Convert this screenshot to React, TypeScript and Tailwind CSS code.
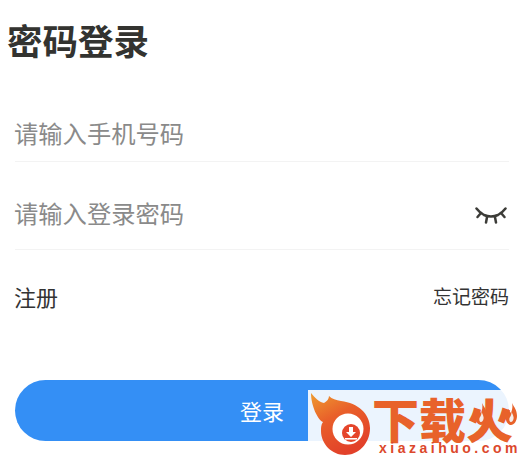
const cjk = "font-['Noto_Sans_CJK_SC','Noto_Sans',sans-serif]";

function EyeClosed() {
  return (
    <svg width="32" height="18" viewBox="0 0 32 18" fill="none" stroke="#3c3c38" strokeWidth="2.500" strokeLinecap="round" className="mr-[2px] mt-[6px]">
      <path d="M1.500 1.500 Q5 6 9 8 Q16 11 23 8 Q27 6 30.500 1.500" />
      <path d="M6 6 L2.500 10" />
      <path d="M26 6 L29.500 10" />
      <path d="M12 10 L11 15.500" />
      <path d="M20 10 L21 15.500" />
    </svg>
  );
}

function SideFlame({ className }: { className: string }) {
  return (
    <svg width="13" height="22" viewBox="0 0 13 22" className={className}>
      <path
        d="M7 0 C9 4 12 7 12 13 C12 18 9 22 6 22 C3 22 0 18 1 13 C2 10 3 9 3 6 C5 8 5 9 6 10 C7 7 8 4 7 0 Z"
        fill="#e8622a"
      />
      <path d="M6.500 9 C8 12 9 14 8.500 16 C8 18 7 19 6 19 C4.500 19 4 17 4.500 15 C5.500 13 6.500 12 6.500 9 Z" fill="#f4ecea" />
    </svg>
  );
}

function Watermark() {
  return (
    <div className="absolute left-[308px] top-[390px] flex h-[69px] w-[216px] bg-[#ffffff]/90">
      <svg width="66" height="69" viewBox="0 0 66 69" className="shrink-0">
        <defs>
          <linearGradient id="flame" x1="0" y1="0" x2="0.5" y2="1">
            <stop offset="0" stopColor="#ee9c30" />
            <stop offset="0.45" stopColor="#e9602a" />
            <stop offset="1" stopColor="#e2412a" />
          </linearGradient>
        </defs>
        <path
          d="M3 3 C7 8 11 12 16 13 C19 11 21 9 21 6 C24 9 28 10 33 11 C50 13 62 24 62 38 C62 54 50 65 37 65 C24 65 13 54 13 41 C13 37 13 35 15 32 C10 30 3 16 3 3 Z"
          fill="url(#flame)"
        />
        <circle cx="40" cy="39" r="15.500" fill="#ffffff" />
        <circle cx="43" cy="43" r="9" fill="#e5452b" />
        <path d="M41 37 H45 V42 H48 L43 47 L38 42 H41 Z" fill="#ffffff" />
        <rect x="37" y="48" width="12" height="1.600" fill="#ffffff" />
      </svg>
      <div className="relative flex-1">
        <div className={`${cjk} ml-[-2px] mt-[8px] text-[47px] leading-[40px] font-black whitespace-nowrap text-[#e8622a]`}>
          下载火
        </div>
        <div className="ml-[5px] mt-[3px] font-['Liberation_Sans',sans-serif] text-[14px] leading-[14px] font-bold tracking-[3.500px] whitespace-nowrap text-[#dc482c]">
          xiazaihuo.com
        </div>
        <SideFlame className="absolute left-[101px] top-[13px]" />
        <SideFlame className="absolute left-[131px] top-[13px]" />
      </div>
    </div>
  );
}

export default function App() {
  return (
    <main className={`${cjk} relative h-[459px] w-[524px] overflow-hidden bg-white`}>
      <h1 className="pl-[7px] pt-[14px] text-[35.500px] leading-[52px] font-bold text-[#333330]">密码登录</h1>

      <div className="mx-[15px] mt-[27px] w-[494px]">
        <div className="flex h-[69px] items-center border-b border-[#f3f3f3] pt-[12px] text-[24.300px] text-[#8a8a8a]">
          <span className="ml-[-1px]">请输入手机号码</span>
        </div>
        <div className="flex h-[88px] items-center justify-between border-b border-[#f3f3f3] pt-[15px] text-[24.300px] text-[#8a8a8a]">
          <span className="ml-[-1px]">请输入登录密码</span>
          <EyeClosed />
        </div>
        <div className="flex h-[92px] items-center justify-between text-[#333333]">
          <span className="ml-[-1px] text-[22px]">注册</span>
          <span className="text-[19px]">忘记密码</span>
        </div>
        <button className="mt-[38px] h-[61px] w-full rounded-full bg-[#348ff5] text-[22px] text-white">登录</button>
      </div>

      <Watermark />
    </main>
  );
}
